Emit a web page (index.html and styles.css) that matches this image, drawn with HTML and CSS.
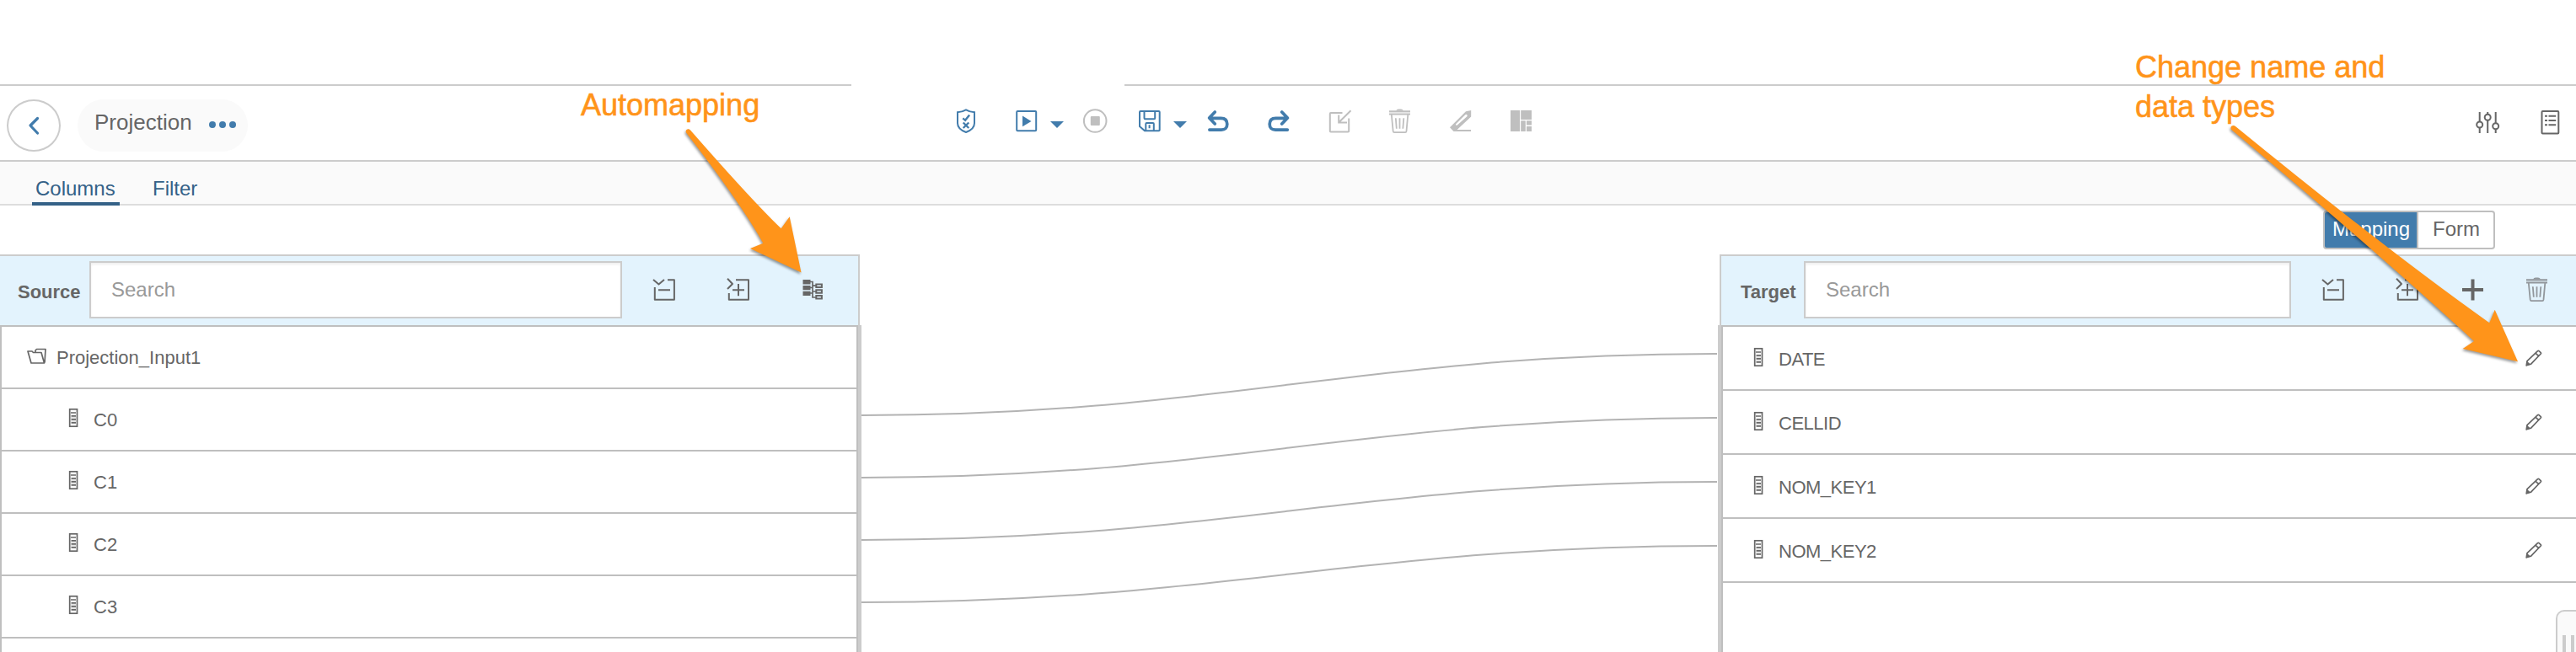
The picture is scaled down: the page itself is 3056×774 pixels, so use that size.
FILE: index.html
```html
<!DOCTYPE html>
<html lang="en">
<head>
<meta charset="utf-8">
<title>Projection</title>
<link rel="stylesheet" href="styles.css">
</head>
<body>
<svg class="defs" width="0" height="0">
  <symbol id="column" viewBox="0 0 12 24">
    <rect x="1.7" y="1.8" width="8.8" height="20.4" fill="none" stroke="currentColor" stroke-width="1.7"/>
    <path d="M3 6H9M3.5 9.8H9M3.5 13.8H9M3.5 17.8H9" stroke="currentColor" stroke-width="1.7"/>
    <path d="M3 12H9M3 16H9" stroke="currentColor" stroke-width=".6" opacity=".6"/>
  </symbol>
  <symbol id="collapse" viewBox="0 0 32 32">
    <path d="M3 4l6.5 5.600L16 4M20 4.200h7.900v23.600H4.800V13M9 16.200h14" fill="none" stroke="currentColor" stroke-width="2" stroke-linejoin="round"/>
  </symbol>
  <symbol id="expand" viewBox="0 0 32 32">
    <path d="M3 2.700L9 9 3 15M13 4.200h15v23.600H4.800V20M9 16.200h14M16 9v14.300" fill="none" stroke="currentColor" stroke-width="2" stroke-linejoin="round"/>
  </symbol>
  <symbol id="trash" viewBox="0 0 32 32">
    <path d="M3 4.200h25M3 7.700h25" stroke="currentColor" stroke-width="1.800"/>
    <path d="M3 5.800h25" stroke="currentColor" stroke-width="2" opacity=".4"/>
    <path d="M11 3.600q1-2 3-2h3q2 0 3 2z" fill="currentColor"/>
    <path d="M5.800 8l1.900 19.700q.2 1.500 1.400 1.500h13q1.200 0 1.400-1.500L25.300 8M10.800 12.200l1 12.500M15.500 12.200v12.500M20.300 12.200l-1 12.500" fill="none" stroke="currentColor" stroke-width="1.800"/>
  </symbol>
  <symbol id="pencil" viewBox="0 0 20 20">
    <path d="M1.200 18.800l.8-5.200L14.600 1.600q.7-.6 1.400 0l2.200 2q.7.700 0 1.400L6.600 17.200zM12 4.200l4 4" fill="none" stroke="currentColor" stroke-width="1.700" stroke-linejoin="round"/>
    <path d="M.8 19.400l1-5.600 4.400 3.600z" fill="currentColor"/>
  </symbol>
  <symbol id="caret" viewBox="0 0 16 8"><path d="M0 0h16L8 8z" fill="currentColor"/></symbol>
</svg>

<div class="top-edge"><span class="edge-left"></span><span class="edge-right"></span></div>

<header class="toolbar">
  <button class="back" aria-label="Back"><svg width="60" height="58" viewBox="0 0 60 58"><path d="M34.5 20.5L26 29l8.5 9" fill="none" stroke="currentColor" stroke-width="3.2" stroke-linecap="round" stroke-linejoin="round"/></svg></button>
  <div class="chip"><span>Projection</span><svg width="32" height="8" viewBox="0 0 32 8" fill="currentColor"><circle cx="4" cy="4" r="4"/><circle cx="16" cy="4" r="4"/><circle cx="28" cy="4" r="4"/></svg></div>
  <div class="actions">
    <svg class="icon" viewBox="0 0 32 32" fill="none" stroke="currentColor" stroke-width="2"><path d="M6 5.2q5.500-.2 10-2.800q4.500 2.600 10 2.800v13q0 7-10 10.800q-10-3.800-10-10.800z"/><path d="M12.300 12.400l2.800 2.400 5-6.400M12.700 17.500l6.600 6.500M19.300 17.500l-6.600 6.500" stroke-width="2.400"/></svg>
    <svg class="icon" viewBox="0 0 32 32"><rect x="4.200" y="4" width="23" height="23.200" rx="1" fill="none" stroke="currentColor" stroke-width="2"/><path d="M11 9.500v12.800l10.500-6.400z" fill="currentColor"/></svg>
    <svg class="caret"><use href="#caret"/></svg>
    <svg class="icon stop muted" viewBox="0 0 32 32"><circle cx="16.200" cy="15.500" r="13.300" fill="none" stroke="currentColor" stroke-width="2"/><rect x="10.800" y="10" width="11" height="11" rx="1" fill="currentColor"/></svg>
    <svg class="icon save" viewBox="0 0 32 32" fill="none" stroke="currentColor" stroke-width="2"><path d="M5 4h21.700q1 0 1 1v21.300q0 1-1 1H10L4 22V5q0-1 1-1zM9.500 4v8.300q0 1 1 1h10.700q1 0 1-1V4M11.300 27v-8q0-1 1-1h7.500q1 0 1 1v8M15.600 20.200v4"/></svg>
    <svg class="caret"><use href="#caret"/></svg>
    <svg class="icon undo" viewBox="0 0 32 32" fill="none" stroke="currentColor" stroke-width="3.700" stroke-linecap="round" stroke-linejoin="round"><path d="M12.300 5L5.600 12l6.700 7M7 12.300h12.500q7.300 0 7.300 7t-7.300 6.800H5.900"/></svg>
    <svg class="icon" viewBox="0 0 32 32" fill="none" stroke="currentColor" stroke-width="3.700" stroke-linecap="round" stroke-linejoin="round"><path d="M19.700 5l6.700 7-6.700 7M25 12.300H12.500q-7.300 0-7.300 7t7.300 6.800h13.800"/></svg>
    <svg class="icon muted" viewBox="0 0 32 32" fill="none" stroke="currentColor" stroke-width="2"><path d="M19.500 6H5.800q-1 0-1 1v20.600q0 1 1 1h20.400q1 0 1-1V12.500M29.500 3.200L15.600 17M15.200 8.500v8.900h9.800"/></svg>
    <svg class="icon muted"><use href="#trash"/></svg>
    <svg class="icon muted" viewBox="0 0 32 32"><path fill="currentColor" fill-rule="evenodd" d="M28.200 3v7.400L11.600 26H28v2H7.500L3 23.200 22 4.300zM11.800 20.600l11.600-10.400q.8-1-.1-1.900t-2 0L10.200 19.200q-.5.800.2 1.300t1.400.1z"/></svg>
    <svg class="icon muted" viewBox="0 0 32 32"><path fill="currentColor" d="M3 3h11v25H3zM15.200 3H28v11H15.200zM15.200 15.200h5.600V28h-5.600zM22 15.200h6v5.300h-6zM22 22h6v6h-6z"/></svg>
  </div>
  <div class="side-actions">
    <svg class="icon" viewBox="0 0 32 32" fill="none" stroke="currentColor" stroke-width="2"><path d="M6.700 5v11M6.700 23.500V30M16.200 5v2.500M16.200 15v15M25.700 5v13M25.700 25.500V30"/><circle cx="6.700" cy="20" r="3.500"/><circle cx="16.200" cy="11.200" r="3.500"/><circle cx="25.700" cy="21.700" r="3.500"/></svg>
    <svg class="icon" viewBox="0 0 32 32" fill="none" stroke="currentColor" stroke-width="2"><rect x="6.500" y="4" width="19.800" height="26.500" rx="1"/><path d="M10 9.800h3M14.500 9.800h8.700M10 15h3M14.500 15h8.700M10 20.200h3M14.500 20.200h8.700"/></svg>
  </div>
</header>

<nav class="tabs"><a class="tab active">Columns</a><a class="tab">Filter</a></nav>

<div class="view-switch"><button class="seg selected">Mapping</button><button class="seg">Form</button></div>

<main class="mapper">
  <section class="source">
    <div class="panel-head">
      <label>Source</label><div class="search">Search</div>
      <div class="tools">
        <svg class="icon"><use href="#collapse"/></svg>
        <svg class="icon"><use href="#expand"/></svg>
        <svg class="icon" viewBox="0 0 32 32"><path fill="currentColor" d="M4.500 4h9v5.400h-9zM4.500 11h9v5.300h-9zM4.500 17.700h9V23h-9z"/><path d="M13 6.500h3v18.500h4M13 13.500h3M13 20h3M16 11.200h4M16 18h4" fill="none" stroke="currentColor" stroke-width="1.700"/><path d="M20.300 9.600h6.600v3.400h-6.600zM20.300 16.300h6.600v3.400h-6.600zM20.300 23h6.600v3.400h-6.600z" fill="none" stroke="currentColor" stroke-width="2"/></svg>
      </div>
    </div>
    <div class="list">
      <div class="row root"><svg class="folder" width="24" height="20" viewBox="0 0 24 20" fill="none" stroke="currentColor" stroke-width="1.700" stroke-linejoin="round"><path d="M1 4h5l1.500 1.500H17L20.500 18H5zM10 5V3l1.500-1.500H22L21 17.500"/></svg><span>Projection_Input1</span></div>
      <div class="row leaf"><svg class="col"><use href="#column"/></svg><span>C0</span></div>
      <div class="row leaf"><svg class="col"><use href="#column"/></svg><span>C1</span></div>
      <div class="row leaf"><svg class="col"><use href="#column"/></svg><span>C2</span></div>
      <div class="row leaf"><svg class="col"><use href="#column"/></svg><span>C3</span></div>
      <div class="row last"></div>
    </div>
  </section>
  <svg class="links" viewBox="1022 302 1016 472" fill="none" stroke="#b3b3b3" stroke-width="2">
    <path d="M1022 493C1448 493 1611 420 2037 420"/>
    <path d="M1022 567C1448 567 1611 496 2037 496"/>
    <path d="M1022 641C1448 641 1611 572 2037 572"/>
    <path d="M1022 715C1448 715 1611 648 2037 648"/>
  </svg>
  <section class="target">
    <div class="panel-head">
      <label>Target</label><div class="search">Search</div>
      <div class="tools">
        <svg class="icon"><use href="#collapse"/></svg>
        <svg class="icon"><use href="#expand"/></svg>
        <svg class="icon" viewBox="0 0 32 32"><path d="M3 16h25M15.500 3.500v25" stroke="currentColor" stroke-width="4"/></svg>
        <svg class="icon faded"><use href="#trash"/></svg>
      </div>
    </div>
    <div class="list">
      <div class="row"><svg class="col"><use href="#column"/></svg><span>DATE</span><svg class="edit"><use href="#pencil"/></svg></div>
      <div class="row"><svg class="col"><use href="#column"/></svg><span>CELLID</span><svg class="edit"><use href="#pencil"/></svg></div>
      <div class="row"><svg class="col"><use href="#column"/></svg><span>NOM_KEY1</span><svg class="edit"><use href="#pencil"/></svg></div>
      <div class="row"><svg class="col"><use href="#column"/></svg><span>NOM_KEY2</span><svg class="edit"><use href="#pencil"/></svg></div>
    </div>
  </section>
</main>

<div class="handle"><i></i><i></i></div>

<svg class="arrows" viewBox="0 0 3056 774" fill="#ff941a">
  <path d="M814 157.500C812.500 154 816.500 151.500 819 154.500Q892 238 926.700 271.300L936.700 257.300 950.500 323.500 890 295 905.300 288.700Q880 243 814 157.500z"/>
  <path d="M2647 153.800C2645 150.500 2649 147.500 2652 150Q2833 298 2953.300 383.300L2959.700 367.700 2987 429.300 2921.700 414 2935 405Q2812 292 2647 153.800z"/>
</svg>
<div class="note note-auto">Automapping</div>
<div class="note note-change">Change name and<br>data types</div>
</body>
</html>
```
FILE: styles.css
```css
* { box-sizing: border-box; }
body {
  margin: 0;
  position: relative;
  width: 3056px;
  height: 774px;
  overflow: hidden;
  background: #fff;
  color: #666;
  font-family: "Liberation Sans", Arial, sans-serif;
  font-size: 22px;
}
svg { display: block; flex: none; }
button { font: inherit; color: inherit; padding: 0; background: #fff; }
.defs { position: absolute; }

.top-edge { display: flex; justify-content: space-between; padding-top: 100px; }
.edge-left { width: 1010px; height: 2px; background: #ccc; }
.edge-right { width: 1722px; height: 2px; background: #ccc; }

.toolbar { display: flex; align-items: flex-start; height: 90px; border-bottom: 2px solid #ccc; padding: 16px 12px 0 8px; }
.back { width: 64px; height: 62px; border: 2px solid #ccc; border-radius: 50%; color: #427cac; }
.chip { display: flex; gap: 20px; width: 202px; height: 62px; margin-left: 20px; padding-left: 20px; border-radius: 31px; background: #fafafa; font-size: 26px; line-height: 54px; }
.chip svg { margin-top: 26px; color: #427cac; }
.actions { display: flex; margin: 10px 0 0 836px; color: #427cac; }
.icon { width: 32px; height: 32px; }
.actions .icon + .icon { margin-left: 40px; }
.caret { width: 16px; height: 8px; margin: 16px 0 0 12px; }
.actions .stop { margin-left: 21px; }
.actions .stop + .save { margin-left: 33px; }
.actions .undo { margin-left: 21px; }
.actions .muted { color: #bfbfbf; }
.side-actions { display: flex; gap: 42px; margin: 10px 3px 0 auto; }

.tabs { display: flex; height: 52px; padding: 16px 0 0 38px; background: #fafafa; border-bottom: 2px solid #ddd; font-size: 24px; }
.tab { height: 36px; line-height: 31px; padding: 0 5px 0 4px; margin-right: 35px; color: #346187; }
.tab.active { border-bottom: 4px solid #346187; width: 104px; }

.view-switch { display: flex; justify-content: flex-end; height: 58px; padding: 6px 96px 0 0; font-size: 24px; }
.seg { width: 91px; height: 46px; padding: 0 0 3px 1px; border: 2px solid #bfbfbf; border-left: 0; border-radius: 0 4px 4px 0; }
.seg.selected { width: 113px; border-left: 2px solid #bfbfbf; border-radius: 4px 0 0 4px; background: #427cac; color: #fff; }

.mapper { display: flex; height: 472px; }
.source { width: 1022px; }
.target { width: 1018px; }
.links { width: 1016px; height: 472px; }
.panel-head { display: flex; align-items: center; height: 84px; border-top: 2px solid #ccc; background: #e3f3fd; }
.panel-head label { font-weight: bold; padding-top: 3px; }
.source .panel-head { width: 1020px; border-right: 2px solid #ccc; padding-left: 21px; }
.target .panel-head { margin-left: 2px; border-left: 2px solid #ccc; padding-left: 23px; }
.source label { width: 85px; }
.target label { width: 75px; }
.search { height: 68px; margin-bottom: 2px; padding-left: 24px; border: 2px solid #ccc; background: #fff; box-shadow: inset 0 2px 3px #eee; color: #999; font-size: 24px; line-height: 63px; }
.source .search { width: 632px; }
.target .search { width: 578px; }
.tools { display: flex; padding-bottom: 2px; }
.source .tools { gap: 56px; margin-left: 34px; }
.target .tools { gap: 44px; margin-left: 34px; }
.target .tools .icon:nth-child(2) { margin-left: 12px; }
.target .tools .icon:nth-child(3) { margin-left: 2px; }
.faded { color: #92979c; }

.list { height: 388px; border-top: 2px solid #bfbfbf; }
.source .list { width: 1018px; border-left: 2px solid #bfbfbf; border-right: 2px solid #bfbfbf; box-shadow: 4px 0 #ccc; }
.target .list { margin-left: 4px; border-left: 2px solid #bfbfbf; box-shadow: -4px 0 #ccc; }
.row { display: flex; align-items: center; height: 74px; border-bottom: 2px solid #bfbfbf; }
.row span { padding-top: 1px; }
.row.last { height: 16px; border-bottom: 0; }
.root { padding-left: 30px; gap: 11px; }
.folder { margin-bottom: 2px; }
.leaf { padding-left: 79px; }
.col { width: 12px; height: 24px; margin: 0 18px 4px 0; }
.target .row { height: 76px; padding: 0 40px 0 36px; }
.target .col { margin-bottom: 2px; }
.target .row span { padding-top: 3px; letter-spacing: -.5px; }
.edit { width: 20px; height: 20px; margin-left: auto; }

.handle { position: absolute; left: 3032px; top: 724px; width: 24px; height: 50px; display: flex; gap: 6px; padding: 28px 0 0 6px; border: 2px solid #ccc; border-width: 2px 0 0 2px; border-radius: 10px 0 0 0; background: #fafafa; overflow: hidden; }
.handle i { flex: none; width: 4px; background: #ccc; }

.arrows { position: absolute; left: 0; top: 0; width: 3056px; height: 774px; filter: drop-shadow(-1px 2px 1.5px rgba(0, 0, 0, .4)); }
.note { position: absolute; color: #ff941a; font-size: 36px; line-height: 47px; white-space: nowrap; -webkit-text-stroke: .6px #ff941a; }
.note-auto { left: 689px; top: 101px; }
.note-change { left: 2533px; top: 56px; }
```
